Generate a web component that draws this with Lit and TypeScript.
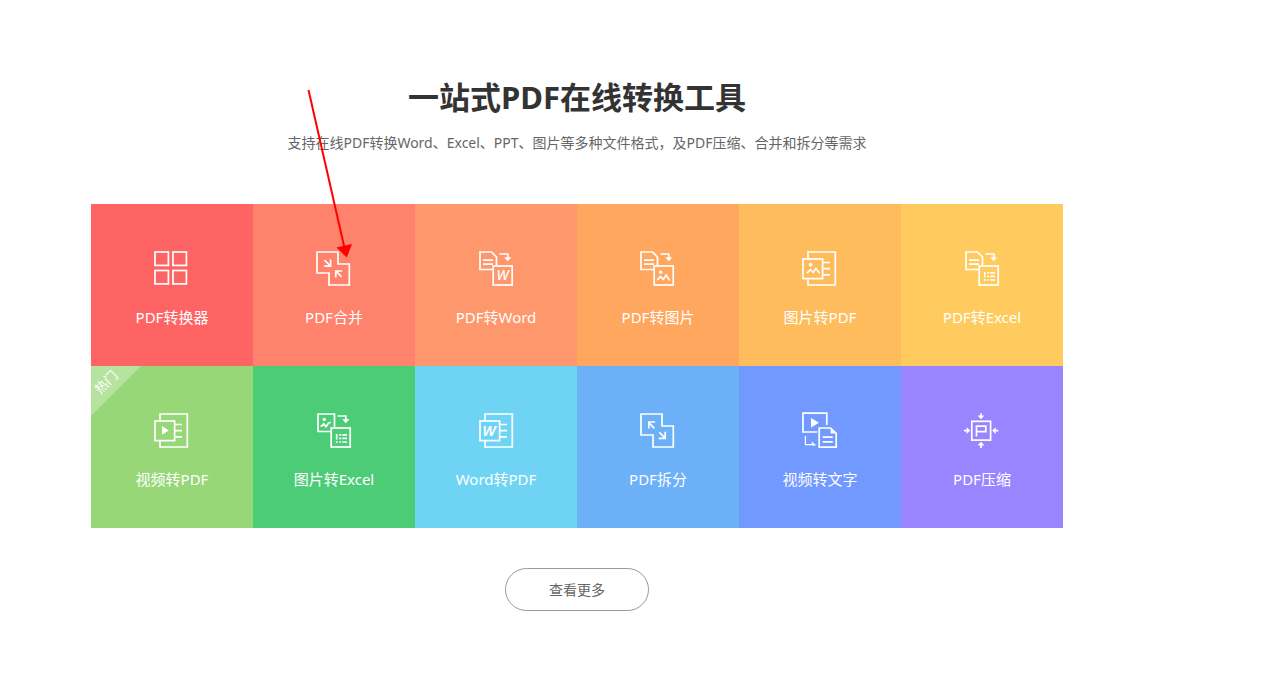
import { LitElement, html, svg, css } from "lit";
import { customElement, property } from "lit/decorators.js";

/* Shared icon parts, drawn on a 40 x 40 grid */
const sourceDoc = svg`
  <path d="M16 20.5H3V3H14.5L19.5 8V16"/>
  <path d="M6 11.2H16M6 15.2H16"/>`;
const turnArrow = svg`
  <path d="M22.5 5H30.8V9.5"/>
  <path class="solid" d="M27.3 8.3H34.3L30.8 12.2Z"/>`;
const targetBox = svg`<rect x="16.2" y="17" width="19" height="19"/>`;
const sheetBox = svg`
  <path d="M8 9.5V3H35.3V36H8V30"/>
  <rect x="3" y="10" width="19.6" height="19.6"/>
  <path d="M23 13.5H30M23 19.6H30M23 25.8H30"/>`;
const listMark = svg`
  <path d="M21.7 23V28.4M21.7 30V31.8M24.3 23.8H26.2M27.3 23.8H32M24.3 27.4H26.2M27.3 27.4H32M24.3 31H26.2M27.3 31H32"/>`;
const joined = svg`<path d="M3 3H24V15H35.3V36H15V24H3Z"/>`;

const icons: Record<string, unknown> = {
  grid: svg`
    <rect x="3" y="3" width="13.4" height="13.4"/>
    <rect x="21" y="3" width="13.4" height="13.4"/>
    <rect x="3" y="21.5" width="13.4" height="13.4"/>
    <rect x="21" y="21.5" width="13.4" height="13.4"/>`,
  merge: svg`${joined}
    <path d="M10.4 11L16 16.6M16.6 10.6V17.2H10.2"/>
    <path d="M27.6 27.8L22.4 22.6M21.8 28.6V22H28.2"/>`,
  split: svg`${joined}
    <path d="M16.4 17.4L11.2 12.2M10.8 17.6V11H17"/>
    <path d="M21.4 21.4L27 27M27.2 20.8V27.4H20.8"/>`,
  pdfWord: svg`<g transform="translate(1 0)">${sourceDoc}${turnArrow}${targetBox}
    <text class="thin" x="19.6" y="31.4" font-size="14">W</text></g>`,
  pdfImage: svg`${sourceDoc}${turnArrow}${targetBox}
    <circle class="solid" cx="22.7" cy="23.3" r="1.8"/>
    <path d="M19.3 31L22.4 27.6L25.2 30.4L28.2 26L31.8 31.6"/>`,
  imagePdf: svg`${sheetBox}
    <circle class="solid" cx="10.7" cy="15.7" r="1.9"/>
    <path d="M7 24.2L10.4 20.6L13.2 23.4L16 19.2L19.4 24.4"/>`,
  pdfExcel: svg`<g transform="translate(1 0)">${sourceDoc}${turnArrow}${targetBox}${listMark}</g>`,
  videoPdf: svg`${sheetBox}<path class="solid" d="M10 15L16.8 19.4L10 23.8Z"/>`,
  imageExcel: svg`<g transform="translate(1 0)">
    <path d="M16 20.5H3V3H19.5V16"/>
    ${turnArrow}${targetBox}${listMark}
    <circle class="solid" cx="9.2" cy="8.4" r="1.7"/>
    <path d="M5.8 15.6L8.8 12.8L11 15.8L13.6 12L15.8 11.2"/></g>`,
  wordPdf: svg`<g transform="translate(1 0)">${sheetBox}
    <text x="5.2" y="25" font-size="15">W</text></g>`,
  videoText: svg`
    <path d="M26.8 14V2.2H3V21H17.2"/>
    <path class="solid" d="M11 7L19 11.8L11 16.6Z"/>
    <path d="M19.2 17H30.6L36.2 22.4V36.2H19.2Z"/>
    <path class="solid" d="M30.6 17V22.4H36.2Z"/>
    <path d="M22.6 26.2H32.8M22.6 30.8H32.8"/>
    <path d="M5.4 25V33.6H14" stroke-width="1.3"/>
    <path class="solid" d="M11.8 30.4V34.4H16.4Z"/>`,
  compress: svg`
    <rect x="9.8" y="10.3" width="18.8" height="18.8"/>
    <path d="M14.5 25.4V15.2H23.8V20.6H14.5"/>
    <path d="M19 2.2V6M19 37V33M2 19.6H6M36.4 19.6H32"/>
    <path class="solid" d="M15.6 4.6H22.4L19 8.2ZM15.6 34.4H22.4L19 30.8ZM4.6 16.2V23L8.2 19.6ZM33.8 16.2V23L30.2 19.6Z"/>`,
};

interface Tool {
  label: string;
  icon: string;
  tone: string;
  hot?: boolean;
}

const tools: Tool[] = [
  { label: "PDF转换器", icon: "grid", tone: "#ff6464" },
  { label: "PDF合并", icon: "merge", tone: "#ff826d" },
  { label: "PDF转Word", icon: "pdfWord", tone: "#ff976c" },
  { label: "PDF转图片", icon: "pdfImage", tone: "#ffa75e" },
  { label: "图片转PDF", icon: "imagePdf", tone: "#ffbc5d" },
  { label: "PDF转Excel", icon: "pdfExcel", tone: "#ffcb5e" },
  { label: "视频转PDF", icon: "videoPdf", tone: "#97d778", hot: true },
  { label: "图片转Excel", icon: "imageExcel", tone: "#4dcc78" },
  { label: "Word转PDF", icon: "wordPdf", tone: "#6fd4f4" },
  { label: "PDF拆分", icon: "split", tone: "#6cb0f8" },
  { label: "视频转文字", icon: "videoText", tone: "#7199ff" },
  { label: "PDF压缩", icon: "compress", tone: "#9985ff" },
];

@customElement("tool-tile")
export class ToolTile extends LitElement {
  @property({ attribute: false }) tool!: Tool;

  static styles = css`
    :host {
      display: block;
    }
    .tile {
      position: relative;
      display: flex;
      flex-direction: column;
      align-items: center;
      gap: 18px;
      padding: 45px 0 39px;
      color: #fff;
      font-size: 15px;
      line-height: 20px;
      text-decoration: none;
      overflow: hidden;
    }
    .icon {
      display: block;
      width: 40px;
      height: 40px;
      fill: none;
      stroke: #fff;
      stroke-width: 1.7;
    }
    .icon .solid {
      fill: #fff;
      stroke: none;
    }
    .icon text {
      fill: #fff;
      stroke: none;
      font-weight: 600;
      font-style: italic;
    }
    .icon .thin {
      font-weight: 500;
    }
    .hot {
      position: absolute;
      top: 0;
      left: 0;
      width: 50px;
      height: 50px;
      background: rgba(255, 255, 255, 0.3);
      clip-path: polygon(0 0, 100% 0, 0 100%);
    }
    .hot-text {
      position: absolute;
      top: 6px;
      left: 0;
      width: 30px;
      font-size: 13px;
      line-height: 20px;
      text-align: center;
      transform: rotate(-45deg);
    }
  `;

  render() {
    const { label, icon, tone, hot } = this.tool;
    return html`<a class="tile" href="#" style="background:${tone}">
      ${hot ? html`<span class="hot"><span class="hot-text">热门</span></span>` : ""}
      <svg class="icon" viewBox="0 0 40 40" aria-hidden="true">${icons[icon]}</svg>
      <span>${label}</span>
    </a>`;
  }
}

@customElement("app-root")
export class AppRoot extends LitElement {
  static styles = css`
    :host {
      display: block;
      position: relative;
      box-sizing: border-box;
      padding: 75px 115px 67px 0;
      background: #fff;
      font-family: "Noto Sans", "Noto Sans CJK SC", sans-serif;
      color: #333;
    }
    .section {
      display: flex;
      flex-direction: column;
      align-items: center;
    }
    .title {
      margin: 0;
      font-size: 31px;
      line-height: 44px;
      font-weight: 700;
    }
    .intro {
      margin: 14px 0 51px;
      font-size: 14px;
      line-height: 20px;
      color: #666;
    }
    .tools {
      display: grid;
      grid-template-columns: repeat(6, 1fr);
      width: 100%;
      max-width: 972px;
    }
    .more {
      margin-top: 40px;
      padding: 11px 43px;
      border: 1px solid #999;
      border-radius: 22px;
      background: #fff;
      color: #666;
      font-family: inherit;
      font-size: 14px;
      line-height: 19px;
      cursor: pointer;
    }
    .pointer {
      position: absolute;
      top: 88px;
      left: 300px;
      width: 60px;
      height: 172px;
      pointer-events: none;
    }
  `;

  render() {
    return html`
      <section class="section">
        <h2 class="title">一站式PDF在线转换工具</h2>
        <p class="intro">支持在线PDF转换Word、Excel、PPT、图片等多种文件格式，及PDF压缩、合并和拆分等需求</p>
        <div class="tools">
          ${tools.map((tool) => html`<tool-tile .tool=${tool}></tool-tile>`)}
        </div>
        <button class="more" type="button">查看更多</button>
      </section>
      <svg class="pointer" viewBox="0 0 60 172" aria-hidden="true">
        <path d="M8.5 2L44.5 160" stroke="#f00" stroke-width="2" />
        <path d="M36.5 159.5L52 156L46.8 169.5Z" fill="#f00" />
      </svg>
    `;
  }
}
